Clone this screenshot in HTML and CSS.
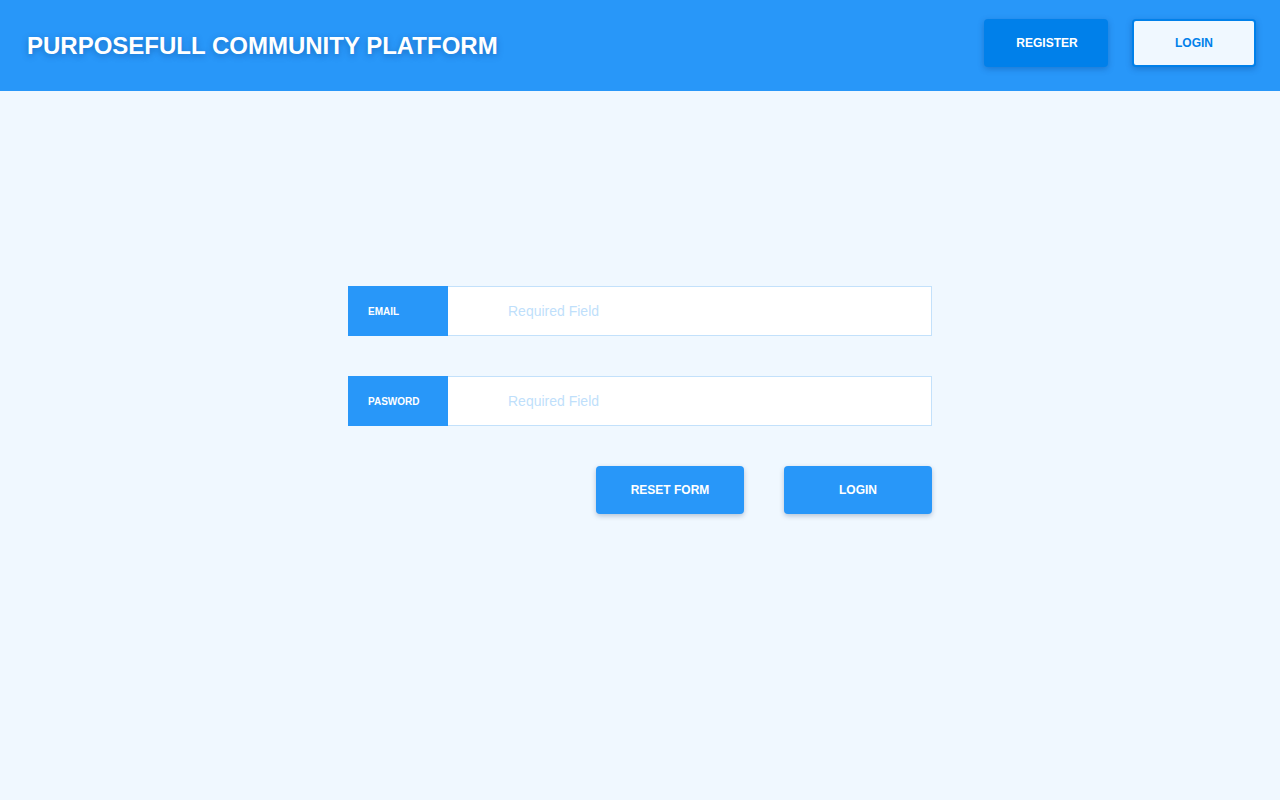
FILE: index.html
```html
<!DOCTYPE html>
<html lang="en">
<head>
<meta charset="utf-8">
<title>Purposefull Community Platform</title>
<link rel="stylesheet" href="styles.css">
</head>
<body>
<header class="topbar">
  <h1 class="brand">PURPOSEFULL COMMUNITY PLATFORM</h1>
  <nav class="topnav">
    <button class="btn btn-dark">REGISTER</button>
    <button class="btn btn-outline">LOGIN</button>
  </nav>
</header>
<main class="main">
  <form class="login-form">
    <div class="field">
      <label class="field-label" for="email">EMAIL</label>
      <input class="field-input" id="email" type="text" placeholder="Required Field">
    </div>
    <div class="field">
      <label class="field-label" for="pw">PASWORD</label>
      <input class="field-input" id="pw" type="password" placeholder="Required Field">
    </div>
    <div class="actions">
      <button type="button" class="btn btn-primary">RESET FORM</button>
      <button type="button" class="btn btn-primary">LOGIN</button>
    </div>
  </form>
</main>
</body>
</html>
```
FILE: styles.css
```css
* { box-sizing: border-box; }
html, body { margin: 0; padding: 0; }
body {
  background: #f0f8ff;
  font-family: "Liberation Sans", Arial, sans-serif;
  min-height: 800px;
}
.topbar {
  height: 91px;
  background: #2897f9;
  display: flex;
  align-items: center;
  justify-content: space-between;
  padding: 0 24px 0 27px;
}
.brand {
  margin: 0;
  color: #fff;
  font-size: 24px;
  font-weight: bold;
  letter-spacing: 0;
  text-shadow: 0 2px 6px rgba(0, 40, 100, 0.35);
}
.topnav {
  display: flex;
  gap: 24px;
  align-items: center;
  align-self: flex-start;
  margin-top: 19px;
}
.btn {
  width: 124px;
  height: 48px;
  border: none;
  border-radius: 4px;
  font-family: "Liberation Sans", Arial, sans-serif;
  font-size: 12px;
  font-weight: bold;
  cursor: pointer;
  padding: 0;
}
.btn-dark {
  background: #0080ea;
  color: #fff;
  padding-left: 2px;
  box-shadow: 0 2px 6px rgba(0, 50, 120, 0.3);
}
.btn-outline {
  background: #f0f8ff;
  color: #0080ea;
  border: 2px solid #0080ea;
  box-shadow: 0 2px 6px rgba(0, 50, 120, 0.3);
}
.btn-primary {
  width: 148px;
  background: #2897f9;
  color: #fff;
  box-shadow: 0 2px 5px rgba(0, 40, 90, 0.25);
}
.main {
  padding-top: 195px;
  display: flex;
  justify-content: center;
}
.login-form {
  width: 584px;
  display: flex;
  flex-direction: column;
  gap: 40px;
}
.field {
  display: flex;
  height: 50px;
}
.field-label {
  width: 100px;
  flex: none;
  background: #2897f9;
  color: #fff;
  font-size: 10px;
  font-weight: bold;
  display: flex;
  align-items: center;
  padding-left: 20px;
}
.field-input {
  flex: 1;
  height: 50px;
  border: 1px solid #c3e1fb;
  border-left: none;
  background: #fff;
  padding: 0 0 0 60px;
  font-family: "Liberation Sans", Arial, sans-serif;
  font-size: 14px;
  color: #333;
  outline: none;
}
.field-input::placeholder { color: #bfdffb; }
.actions {
  display: flex;
  justify-content: flex-end;
  gap: 40px;
}
```
